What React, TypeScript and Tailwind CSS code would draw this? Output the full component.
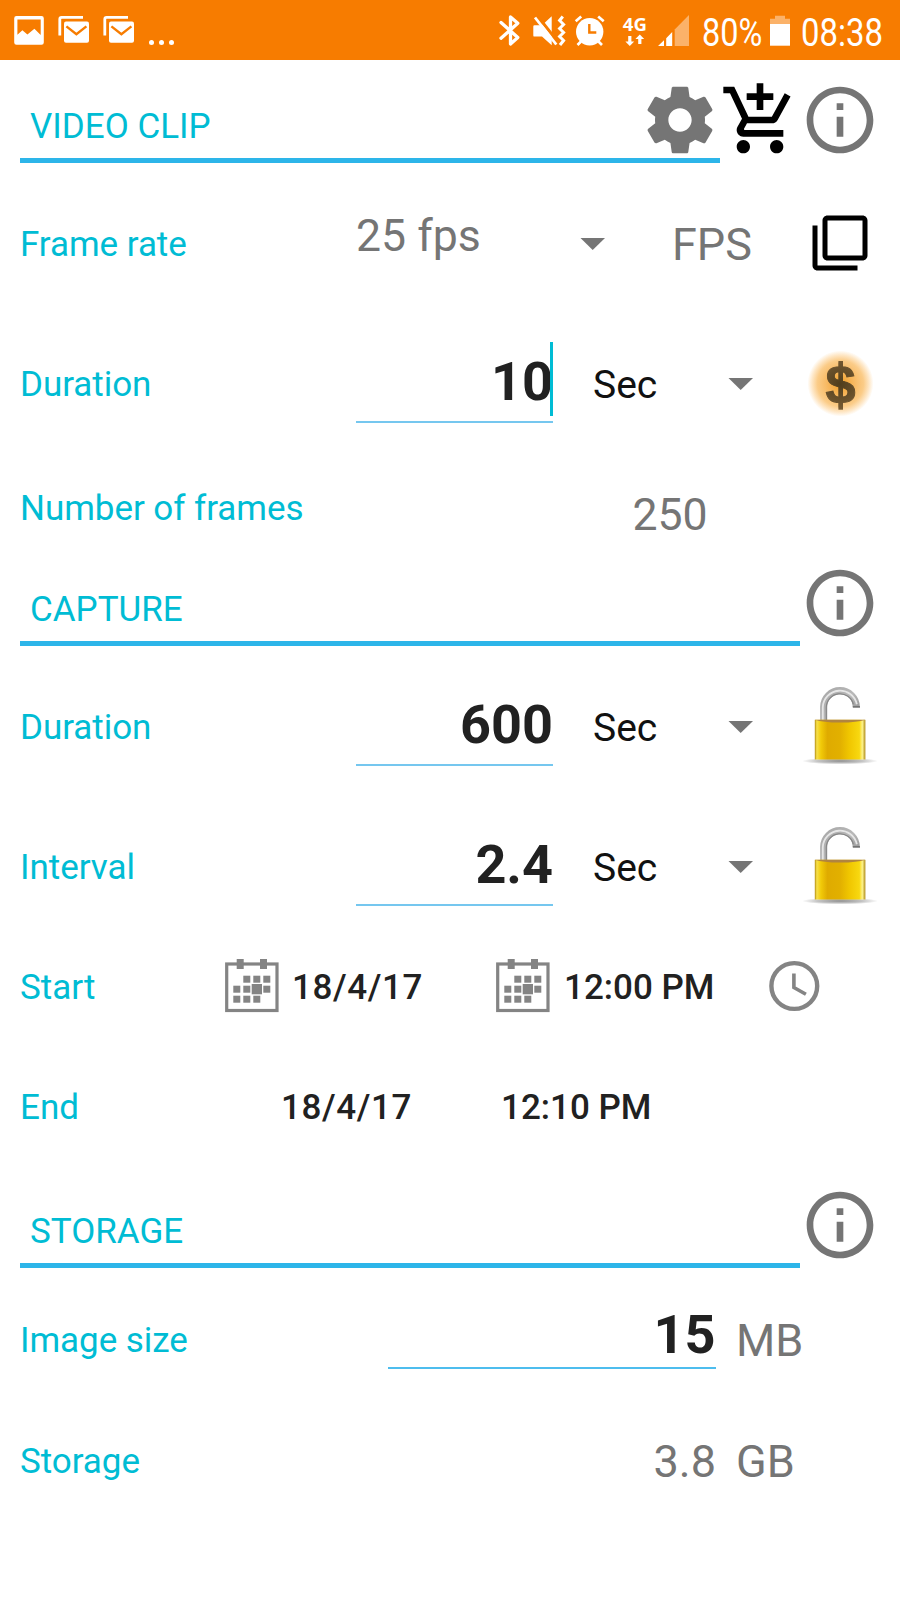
import { useState } from 'react';
import type { ReactNode } from 'react';
import { MdAddShoppingCart, MdFilterNone, MdInfoOutline } from 'react-icons/md';

function MailIcon() {
  return (
    <svg width="31" height="28" viewBox="58 17 31 28" fill="none">
      <path d="M59.8 36.6V20.2q0-1.8 1.8-1.8H83" stroke="white" strokeWidth="2.8" />
      <rect x="64" y="22.6" width="25" height="21.2" rx="2" fill="white" />
      <path d="M66.4 27.4l10 7.9 10-7.9" stroke="#f77c00" strokeWidth="2.4" />
    </svg>
  );
}

function StatusBar() {
  return (
    <div className="h-[60px] bg-[#f77c00] flex items-center text-white">
      {/* Notifications */}
      <svg className="ml-[14px]" width="30" height="29" viewBox="14 16 30 29">
        <path
          fillRule="evenodd"
          fill="white"
          d="M16.5 16h25q2.3 0 2.3 2.3v24.2q0 2.3-2.3 2.3h-25q-2.3 0-2.3-2.3V18.3q0-2.3 2.3-2.3zM17.4 19.5V34.8l5-4.5 5 4.3 7-5.8 6.3 6.2V19.5z"
        />
      </svg>
      <div className="ml-[14px]"><MailIcon /></div>
      <div className="ml-[14px]"><MailIcon /></div>
      <div className="flex gap-[5px] ml-[15px] mt-[24px]">
        <span className="w-[5px] h-[5px] rounded-full bg-white" />
        <span className="w-[5px] h-[5px] rounded-full bg-white" />
        <span className="w-[5px] h-[5px] rounded-full bg-white" />
      </div>

      {/* System icons */}
      <svg className="ml-auto" width="150" height="60" viewBox="498 0 150 60" fill="none">
        <path d="M501 22.5l16.8 15-7.3 6.5V17l7.3 6.2L501 38.2" stroke="white" strokeWidth="3.3" strokeLinejoin="round" strokeLinecap="round" />
        <path d="M533.3 26.5q0-1.2 1.2-1.2h7.5l9.7-9v29l-9.7-8.7h-7.5q-1.2 0-1.2-1.2z" fill="white" />
        <path d="M537.5 16l20 25.500" stroke="#f77c00" strokeWidth="3" />
        <path d="M535 17.5l21.3 27" stroke="white" strokeWidth="2.8" />
        <path d="M562.8 16.5l-3.2 4 4 4-4 4 4 4-4 4 4 4-3.6 4.5" stroke="white" strokeWidth="3" />
        <circle cx="589.7" cy="31.7" r="13.7" fill="white" />
        <path d="M589.3 24v8.5h7" stroke="#f77c00" strokeWidth="2.4" />
        <path d="M575.7 21.3l5.5-4.8M598.2 16.5l5.5 4.8M581 41.5l-3.5 3.5M598.5 41.5l3.5 3.5" stroke="white" strokeWidth="2.7" />
        <text x="622.8" y="31" fill="white" fontSize="18.5" fontWeight="700" fontFamily="Open Sans, sans-serif" textLength="24" lengthAdjust="spacingAndGlyphs">4G</text>
        <path d="M628.2 36h3.2v5.5h2.8l-4.4 4.5-4.4-4.5h2.800zM638.2 44v-5h-2.800l4.400-4.500 4.400 4.500h-2.800v5z" fill="white" />
      </svg>
      <svg className="ml-[10px]" width="31" height="31" viewBox="658 15 31 31">
        <path d="M658 46l6-5.8V46zM666.2 38.2l6-6.2v14h-6z" fill="white" />
        <path d="M674.7 29.5L689 15v31h-14.3z" fill="#fbb269" />
      </svg>
      <span className="w-[60px] ml-[13px] text-[38px] leading-[60px] pt-[5px]">
        <span className="block origin-left scale-x-[0.855]">80%</span>
      </span>
      <svg className="ml-[8px]" width="20" height="31" viewBox="770 15 20 31">
        <path d="M775 15.7h10v3h5V24h-20v-5.3h5z" fill="#fbb269" />
        <rect x="770" y="24" width="20" height="21.7" fill="white" />
      </svg>
      <span className="w-[82px] ml-[11px] mr-[17px] text-[38px] leading-[60px] pt-[5px]">
        <span className="block origin-left scale-x-[0.865]">08:38</span>
      </span>
    </div>
  );
}

function GearIcon() {
  return (
    <svg width="80" height="80" viewBox="0 0 24 24" fill="#757575">
      <path d="M19.43 12.98c.04-.32.07-.64.07-.98s-.03-.66-.07-.98l2.11-1.65c.19-.15.24-.42.12-.64l-2-3.46c-.12-.22-.39-.3-.61-.22l-2.49 1c-.52-.4-1.08-.73-1.69-.98l-.38-2.65C14.46 2.18 14.25 2 14 2h-4c-.25 0-.46.18-.49.42l-.38 2.65c-.61.25-1.17.59-1.69.98l-2.49-1c-.23-.09-.49 0-.61.22l-2 3.46c-.13.22-.07.49.12.64l2.11 1.65c-.04.32-.07.65-.07.98s.03.66.07.98l-2.11 1.65c-.19.15-.24.42-.12.64l2 3.46c.12.22.39.3.61.22l2.49-1c.52.4 1.08.73 1.69.98l.38 2.65c.03.24.24.42.49.42h4c.25 0 .46-.18.49-.42l.38-2.65c.61-.25 1.17-.59 1.69-.98l2.49 1c.23.09.49 0 .61-.22l2-3.46c.12-.22.07-.49-.12-.64l-2.11-1.65zM12 15.5c-1.93 0-3.5-1.57-3.5-3.5s1.57-3.5 3.5-3.5 3.5 1.57 3.5 3.5-1.57 3.5-3.5 3.5z" />
    </svg>
  );
}

function LockIcon() {
  return (
    <svg width="80" height="80" viewBox="0 0 80 80" fill="none">
      <defs>
        <linearGradient id="brass" x1="0" x2="1" y1="0" y2="0">
          <stop offset="0" stopColor="#b28b10" />
          <stop offset="0.04" stopColor="#f7e04a" />
          <stop offset="0.12" stopColor="#f2cb08" />
          <stop offset="0.25" stopColor="#dfab00" />
          <stop offset="0.5" stopColor="#e2b000" />
          <stop offset="0.68" stopColor="#f0c600" />
          <stop offset="0.88" stopColor="#f8d810" />
          <stop offset="0.94" stopColor="#fdf38c" />
          <stop offset="1" stopColor="#b08c18" />
        </linearGradient>
        <linearGradient id="steel" x1="0" x2="1" y1="0" y2="1">
          <stop offset="0" stopColor="#a9a9a9" />
          <stop offset="0.5" stopColor="#b9b9b9" />
          <stop offset="1" stopColor="#8a8a8a" />
        </linearGradient>
        <radialGradient id="floor">
          <stop offset="0" stopColor="#8f8f8f" />
          <stop offset="0.6" stopColor="#c4c4c4" />
          <stop offset="1" stopColor="#ffffff" />
        </radialGradient>
      </defs>
      <ellipse cx="40" cy="74" rx="38" ry="3.4" fill="url(#floor)" />
      <path d="M23.7 34V20A16.3 16.3 0 0 1 56.3 20" stroke="url(#steel)" strokeWidth="7.2" />
      <path d="M22.8 34V20A17.2 17.2 0 0 1 56.8 17.3" stroke="#e6e6e6" strokeWidth="1.8" />
      <path d="M26.3 34V20A13.7 13.7 0 0 1 53.3 17.3" stroke="#858585" strokeWidth="1.2" />
      <path d="M52.8 20h7.2" stroke="#555555" strokeWidth="1.2" />
      <rect x="14.8" y="32.8" width="50.6" height="39.7" fill="url(#brass)" />
      <path d="M14.8 32.8h50.6q-8 2.8-25.3 2.8T14.8 32.8z" fill="#b08440" />
    </svg>
  );
}

const calendarCells = [
  [18.3, 16.7], [28.3, 16.7], [38.3, 16.7],
  [8.3, 26.7], [18.3, 26.7], [38.3, 26.7],
  [8.3, 36.7], [18.3, 36.7], [28.3, 36.7],
];

function CalendarIcon() {
  return (
    <svg width="54" height="54" viewBox="0 0 54 54" fill="#848484">
      <rect x="1.7" y="5" width="50.3" height="46.5" fill="none" stroke="#848484" strokeWidth="3.2" />
      <rect x="11.7" y="0" width="7" height="10" />
      <rect x="35" y="0" width="7" height="10" />
      {calendarCells.map(([x, y]) => (
        <rect key={`${x}-${y}`} x={x} y={y} width="7" height="7" />
      ))}
      <rect x="26.7" y="25" width="10.3" height="10.3" />
    </svg>
  );
}

function ClockIcon() {
  return (
    <svg width="52" height="52" viewBox="0 0 52 52" fill="none" stroke="#848484">
      <circle cx="26.3" cy="26" r="22.9" strokeWidth="4.4" />
      <path d="M25.9 13.5v14l12 6.8" strokeWidth="3.6" />
    </svg>
  );
}

function DollarIcon() {
  return (
    <svg width="68" height="68" viewBox="0 0 68 68">
      <defs>
        <radialGradient id="glow">
          <stop offset="0" stopColor="#ef9f28" />
          <stop offset="0.4" stopColor="#f7b860" />
          <stop offset="0.7" stopColor="#fbcc88" />
          <stop offset="0.86" stopColor="#fee6c4" />
          <stop offset="1" stopColor="#ffffff" />
        </radialGradient>
        <radialGradient id="coin" gradientUnits="userSpaceOnUse" cx="34" cy="34" r="26">
          <stop offset="0" stopColor="#4f3d1c" />
          <stop offset="1" stopColor="#785c34" />
        </radialGradient>
      </defs>
      <circle cx="34.5" cy="33.5" r="33" fill="url(#glow)" />
      <text x="34.6" y="52.5" textAnchor="middle" fontFamily="Liberation Sans, sans-serif" fontWeight="700" fontSize="54" stroke="url(#coin)" strokeWidth="1" fill="url(#coin)">$</text>
      <rect x="32.4" y="11" width="4.6" height="48.7" fill="url(#coin)" />
    </svg>
  );
}

function Arrow() {
  return (
    <svg width="25" height="13" viewBox="0 0 25 13" fill="#757575">
      <path d="M0.5 0H25L12.7 12z" />
    </svg>
  );
}

function SectionHeader({ title, children }: { title: string; children?: ReactNode }) {
  return (
    <div className="h-[83px] px-5 flex items-start">
      <h2 className="flex-1 h-full pl-[10px] pt-[27px] border-b-[5px] border-[#2db5e9] text-[35px] leading-[40px] text-[#00bcd4]">
        {title}
      </h2>
      {children}
      <MdInfoOutline size={80} color="#757575" />
    </div>
  );
}

function Label({ text }: { text: string }) {
  return (
    <span className="w-[336px] shrink-0 pt-[2px] text-[35px] tracking-[-0.05px] text-[#00bcd4] whitespace-nowrap">
      {text}
    </span>
  );
}

type InputRowProps = {
  label: string;
  value: string;
  focused?: boolean;
  icon: ReactNode;
};

function InputRow({ label, value, focused, icon }: InputRowProps) {
  return (
    <div className="h-[140px] px-5 flex items-center">
      <Label text={label} />
      <div className="relative self-start mt-[28px] w-[197px] h-[81px] border-b-2 border-[#75c7ef] text-right text-[54px] leading-[80px] font-bold text-[#212121]">
        {value}
        {focused && <span className="absolute top-0 right-0 w-[3px] h-[74px] bg-[#00bcd4]" />}
      </div>
      <span className="w-[134.5px] ml-[40px] pt-[2px] text-[39px] text-[#111111]">Sec</span>
      <Arrow />
      <div className="ml-auto w-[80px] flex justify-center">{icon}</div>
    </div>
  );
}

export default function App() {
  const [duration] = useState('10');
  const [captureDuration] = useState('600');
  const [interval] = useState('2.4');

  return (
    <div className="w-[900px] h-[1600px] bg-white font-['Roboto',sans-serif] overflow-hidden">
      <StatusBar />

      {/* Video clip */}
      <div className="mt-5">
        <SectionHeader title="VIDEO CLIP">
          <div className="-ml-20"><GearIcon /></div>
          <MdAddShoppingCart size={80} color="#000000" />
        </SectionHeader>
        <div className="mt-[11px] h-[140px] px-5 flex items-center">
          <Label text="Frame rate" />
          <span className="w-[223.5px] pb-[15px] text-[44.6px] text-[#757575]">25 fps</span>
          <Arrow />
          <span className="ml-[67.5px] pt-[2px] text-[45px] text-[#757575]">FPS</span>
          <div className="ml-auto w-[80px] pb-[3px] flex justify-center">
            <MdFilterNone size={60} color="#000000" />
          </div>
        </div>
        <InputRow label="Duration" value={duration} focused icon={<DollarIcon />} />
        <div className="h-[109px] px-5 flex items-center">
          <Label text="Number of frames" />
          <span className="ml-[276.5px] pt-[14px] text-[44.6px] text-[#757575]">250</span>
        </div>
      </div>

      {/* Capture */}
      <SectionHeader title="CAPTURE" />
      <div className="mt-[11px]">
        <InputRow label="Duration" value={captureDuration} icon={<LockIcon />} />
        <InputRow label="Interval" value={interval} icon={<LockIcon />} />
        <div className="h-[100px] px-5 flex items-center text-[35px] font-medium text-[#212121]">
          <span className="w-[205px] pt-[2px] font-normal text-[#00bcd4]">Start</span>
          <div className="pb-[2px]"><CalendarIcon /></div>
          <span className="w-[203px] ml-[13px] pt-[2px] tracking-[0.6px]">18/4/17</span>
          <div className="ml-[1px] pb-[2px]"><CalendarIcon /></div>
          <span className="w-[204px] ml-[14px] pt-[2px]">12:00 PM</span>
          <div className="pb-[3px]"><ClockIcon /></div>
        </div>
        <div className="h-[140px] px-5 pt-[2px] flex items-center text-[35px] font-medium text-[#212121]">
          <span className="w-[261px] font-normal text-[#00bcd4]">End</span>
          <span className="w-[220px] tracking-[0.6px]">18/4/17</span>
          <span>12:10 PM</span>
        </div>
      </div>

      {/* Storage */}
      <div className="mt-[8px]">
        <SectionHeader title="STORAGE" />
        <div className="mt-[11px] h-[120px] px-5 pt-[2px] flex items-center">
          <Label text="Image size" />
          <div className="self-start ml-[31.5px] mt-[14px] w-[328px] h-[74px] border-b-2 border-[#4dbdee] text-right text-[54px] leading-[80px] font-bold text-[#212121]">
            15
          </div>
          <span className="ml-[20.5px] pt-[1px] text-[45px] text-[#757575]">MB</span>
        </div>
        <div className="h-[123px] px-5 pt-[1px] flex items-center">
          <Label text="Storage" />
          <span className="w-[360px] pt-[1px] text-right text-[45px] text-[#757575]">3.8</span>
          <span className="ml-[20px] pt-[1px] text-[45px] text-[#757575]">GB</span>
        </div>
      </div>
    </div>
  );
}
